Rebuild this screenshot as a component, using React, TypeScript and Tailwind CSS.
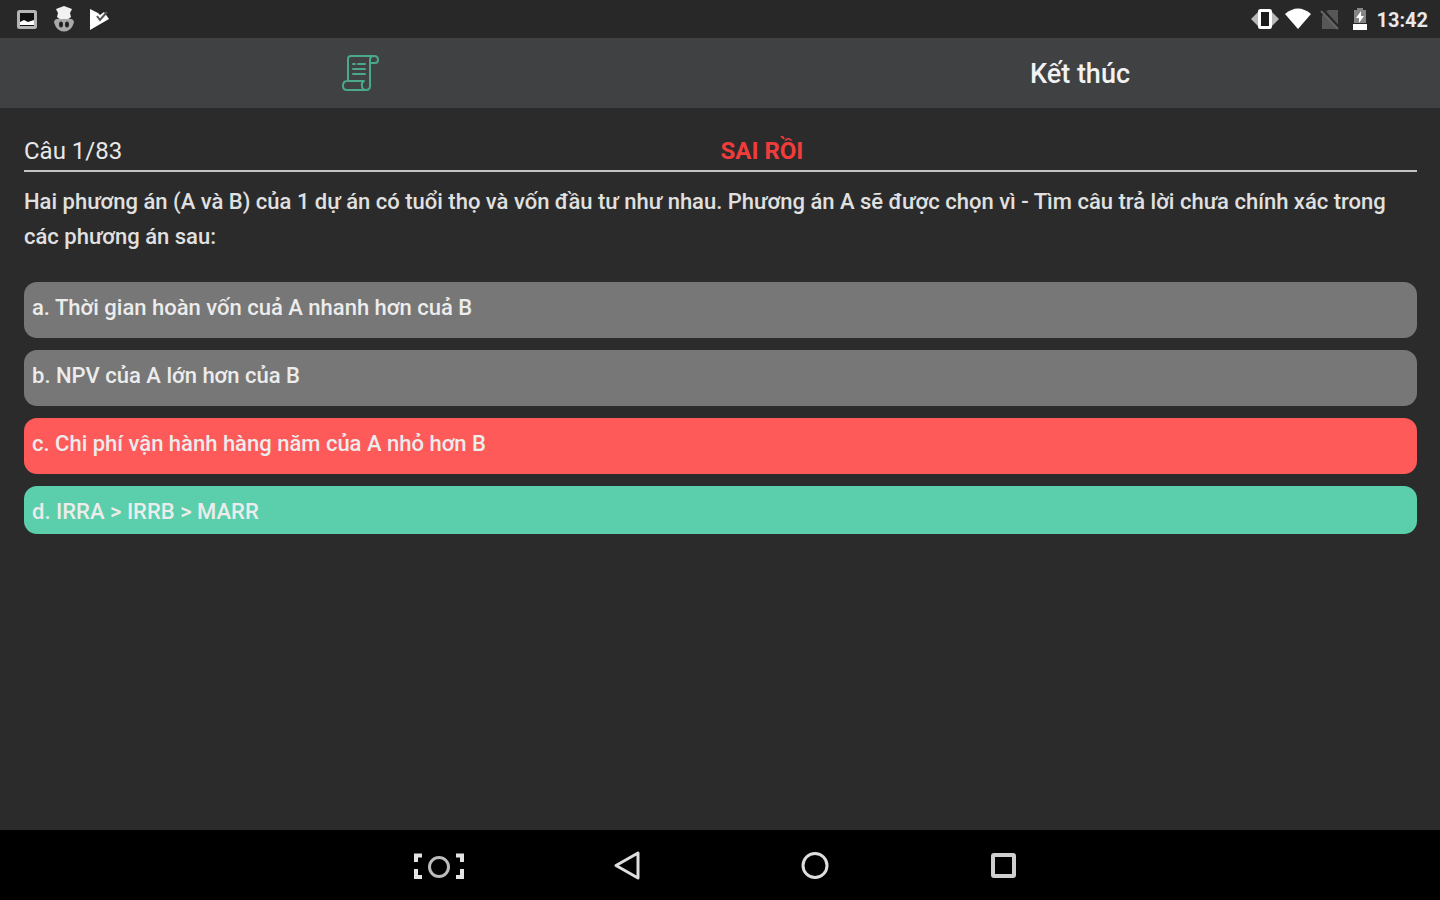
import React from "react";

const question =
  "Hai phương án (A và B) của 1 dự án có tuổi thọ và vốn đầu tư như nhau. Phương án A sẽ được chọn vì - Tìm câu trả lời chưa chính xác trong các phương án sau:";

const answers = [
  { id: "a", text: "Thời gian hoàn vốn cuả A nhanh hơn cuả B", style: "bg-[#777777] pb-[13px]" },
  { id: "b", text: "NPV của A lớn hơn của B", style: "bg-[#777777] pb-[13px]" },
  { id: "c", text: "Chi phí vận hành hàng năm của A nhỏ hơn B", style: "bg-[#ff5a5a] pb-[13px]" },
  { id: "d", text: "IRRA > IRRB > MARR", style: "bg-[#5bcfab] pb-[5px]" },
];

const StatusBar = () => {
  return (
    <div className="h-[38px] bg-[#282828] pl-4 pr-3 flex items-center justify-between">
      <div className="flex items-center gap-3">
        <svg width="24" height="26" viewBox="0 0 24 26">
          <rect x="2.5" y="5.5" width="17" height="16" rx="1" fill="#111" stroke="#b4b4b4" strokeWidth="3" />
          <path d="M4 19v-3l4-2 4 2 6-2v5H4z" fill="#fff" />
        </svg>
        <svg width="24" height="28" viewBox="0 0 24 28">
          <path d="M4 4l8-3 8 3-2 4 1 4-4 3H9l-4-3 1-4z" fill="#f2f2f2" />
          <path d="M2 17q1-4 6-3h8q5-1 6 3-1 5-5 8-5 3-10 0-4-3-5-8z" fill="#a8a8a8" />
          <ellipse cx="9" cy="19.500" rx="2" ry="3" fill="#222" />
          <ellipse cx="15" cy="19.500" rx="2" ry="3" fill="#222" />
        </svg>
        <svg width="24" height="26" viewBox="0 0 24 26">
          <path d="M2 3l8 4 2 2 4-3 5 7L2 24z" fill="#fff" />
          <path d="M9 10l3 4 7-8" fill="none" stroke="#555" strokeWidth="2" />
        </svg>
      </div>
      <div className="flex items-center">
        <svg width="30" height="26" viewBox="0 0 30 26">
          <path d="M8 6L1 13l7 7zM22 6l7 7-7 7z" fill="#b9b9b9" />
          <rect x="9.500" y="4.500" width="11" height="17" rx="1" fill="#1c1c1c" stroke="#fff" strokeWidth="3" />
        </svg>
        <svg className="ml-1" width="28" height="26" viewBox="0 0 28 26">
          <path d="M1 8Q14-3 27 8L14 23z" fill="#fff" />
        </svg>
        <svg className="ml-2" width="20" height="26" viewBox="0 0 20 26">
          <path d="M8 4h10v19H2V10z" fill="#575757" />
          <path d="M2 3l18 20" stroke="#282828" strokeWidth="3" />
          <path d="M1 5l17 18" stroke="#666" strokeWidth="2" />
        </svg>
        <svg className="ml-3" width="16" height="26" viewBox="0 0 16 26">
          <path d="M5 2h6v2h3v13H2V4h3z" fill="#858585" />
          <path d="M1 18h14v6H1z" fill="#fff" />
          <path d="M9 5l-5 7h3v5l5-7H9z" fill="#fff" />
        </svg>
        <span className="ml-2 pt-0.5 text-[20px] leading-[26px] font-bold text-[#e8e8e8]">13:42</span>
      </div>
    </div>
  );
};

const ScrollIcon = () => {
  return (
    <svg width="40" height="38" viewBox="-2 0 40 38" fill="none" stroke="#4aa88d" strokeWidth="2" strokeLinejoin="round" strokeLinecap="round">
      <path d="M6 27V5q0-3 3-3h23q-4 0-4 4v26q0 4-4 4H5q-4 0-4-4 0-5 4-5h17q-3 2-2 5 0 4 4 4" />
      <path d="M32 2q4 0 4 4 0 3-3 3h-5" />
      <path d="M11 10h2M16 10h7M11 15h12M11 20h12" />
    </svg>
  );
};

const Toolbar = () => {
  return (
    <header className="h-[70px] bg-[#404143] grid grid-cols-2">
      <button aria-label="Đề thi" className="flex items-center justify-center">
        <ScrollIcon />
      </button>
      <button className="pt-0.5 text-[27px] leading-[35px] font-medium text-[#f2f2f2]">Kết thúc</button>
    </header>
  );
};

const NavBar = () => {
  return (
    <nav className="h-[70px] bg-black pl-0.5 flex justify-center">
      <button aria-label="Chụp màn hình" className="w-[188px] flex items-center justify-center">
        <svg width="52" height="30" viewBox="0 0 52 30" fill="none" stroke="#e4e4e4">
          <path d="M9 5.500H3V12M43 5.500h6V12M3 19v8H9M49 19v8H43" strokeWidth="4" />
          <circle cx="26" cy="17" r="9.500" stroke="#bdbdbd" strokeWidth="3" />
        </svg>
      </button>
      <button aria-label="Quay lại" className="w-[188px] flex items-center justify-center">
        <svg width="30" height="30" viewBox="0 0 30 30" fill="none" stroke="#dedede" strokeWidth="3" strokeLinejoin="round">
          <path d="M26 3v25L4 15.500z" />
        </svg>
      </button>
      <button aria-label="Màn hình chính" className="w-[188px] flex items-center justify-center">
        <svg width="30" height="30" viewBox="0 0 30 30" fill="none" stroke="#dedede" strokeWidth="3">
          <circle cx="15" cy="15.500" r="12" />
        </svg>
      </button>
      <button aria-label="Ứng dụng gần đây" className="w-[188px] flex items-center justify-center">
        <svg width="30" height="30" viewBox="0 0 30 30" fill="none" stroke="#cfcfcf" strokeWidth="4">
          <rect x="5" y="5" width="21" height="21" rx="1" />
        </svg>
      </button>
    </nav>
  );
};

const App = () => {
  return (
    <div className="min-h-screen bg-[#2b2b2b] flex flex-col font-['Roboto',sans-serif]">
      <StatusBar />
      <Toolbar />
      <main className="flex-1 pl-6 pr-[23px] pt-[26px]">
        <div className="grid grid-cols-2 border-b-2 border-[#c4c4c4] pb-px text-[24px] leading-[35px]">
          <span className="text-[#e8e8e8]">Câu 1/83</span>
          <span className="font-bold text-[#f23c3c]">SAI RỒI</span>
        </div>
        <p className="pt-3 text-[22px] leading-[35px] font-medium text-[#e0e0e0]">{question}</p>
        <div className="mt-7 flex flex-col gap-3">
          {answers.map((answer) => (
            <button
              key={answer.id}
              className={`w-full rounded-[13px] px-2 pt-2 text-left text-[22px] leading-[35px] font-medium text-[#ececec] ${answer.style}`}
            >
              {answer.id}. {answer.text}
            </button>
          ))}
        </div>
      </main>
      <NavBar />
    </div>
  );
};

export default App;
